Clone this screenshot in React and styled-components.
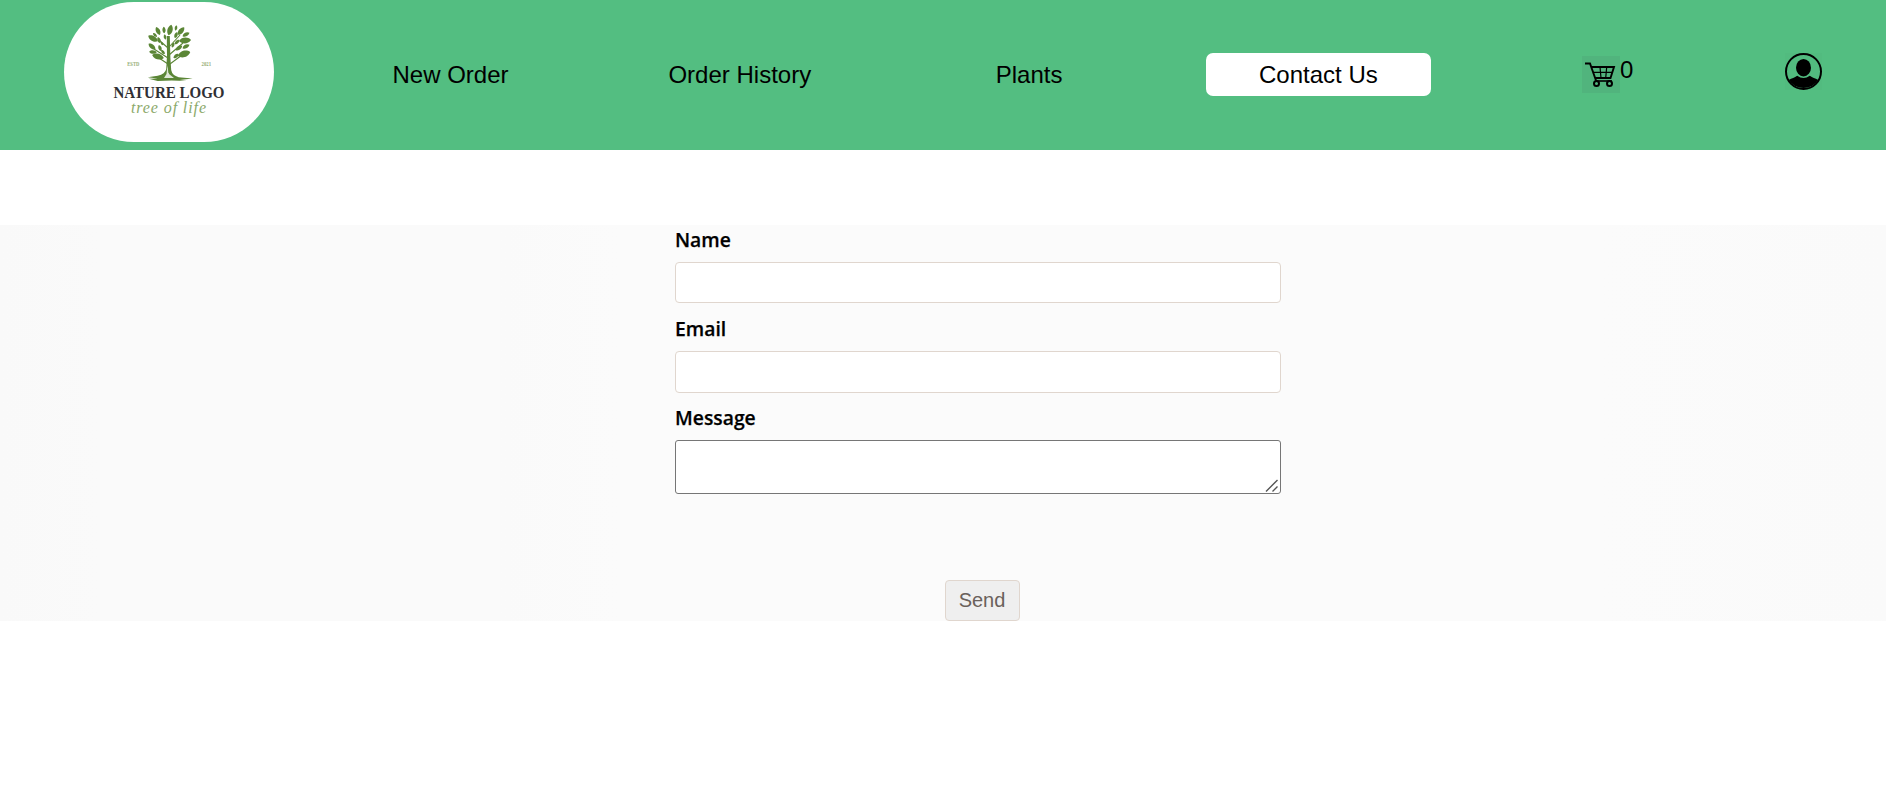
import React from "react";
import styled, { createGlobalStyle } from "styled-components";

const GlobalStyle = createGlobalStyle`
  *, *::before, *::after { box-sizing: border-box; }
  body { margin: 0; background: #fff; font-family: "Liberation Sans", Arial, sans-serif; color: #000; }
`;

const Page = styled.div`
  width: 1886px;
`;

const Header = styled.header`
  display: flex;
  align-items: flex-start;
  gap: 64px;
  height: 150px;
  padding: 2px 64px 0;
  background: #53be81;
`;

const LogoBadge = styled.div`
  width: 210px;
  height: 140px;
  flex: none;
  border-radius: 70px;
  background: #fff;
  overflow: hidden;
  svg { display: block; }
`;

const Nav = styled.nav`
  display: flex;
  flex: 1;
  gap: 64.3px;
  padding-top: 51px;
`;

const NavItem = styled.a`
  flex: 0 0 225px;
  height: 43px;
  line-height: 43px;
  border-radius: 7px;
  text-align: center;
  font-size: 24px;
  background: ${(p) => (p.$active ? "#fff" : "transparent")};
`;

const CartLink = styled.a`
  display: flex;
  flex: 0 0 225px;
  justify-content: center;
  height: 40px;
  font-size: 24px;
  line-height: 33px;
`;

const CartIcon = styled.svg`
  width: 38px;
  height: 37px;
  margin-top: 3px;
  background: #51b47d;
`;

const ProfileIcon = styled.svg`
  width: 37px;
  height: 37px;
  margin-top: 51px;
  flex: none;
  background: #52bb7f;
`;

const ContactSection = styled.main`
  margin-top: 75px;
  height: 396px;
  background: linear-gradient(90deg, #f9f9f9 0, #fafafa 100px, #fafafa 500px, #fbfbfb 620px, #fbfbfb 1600px, #fafafa 1886px);
`;

const Form = styled.form`
  display: flex;
  flex-direction: column;
  width: 606px;
  margin-left: 675px;
`;

const Label = styled.label`
  display: block;
  height: ${(p) => p.$height}px;
  padding-top: ${(p) => p.$offset}px;
  font: 600 20px/28px "Open Sans", "Noto Sans", sans-serif;
  -webkit-text-stroke: 0.25px #000;
  span {
    display: inline-block;
    transform: scaleX(0.965);
    transform-origin: 0 50%;
  }
`;

const Input = styled.input`
  display: block;
  width: 100%;
  height: ${(p) => p.$height}px;
  border: 1px solid #e0d6ce;
  border-radius: 4px;
  background: #fff;
  outline: none;
`;

const MessageBox = styled.textarea`
  display: block;
  width: 100%;
  height: 54px;
  border: 1px solid #767676;
  border-radius: 3px;
  background: #fff;
  resize: none;
  outline: none;
`;

const MessageField = styled.div`
  position: relative;
`;

const Grip = styled.svg`
  position: absolute;
  right: 2px;
  bottom: 1px;
  width: 14px;
  height: 14px;
`;

const SendButton = styled.button`
  align-self: flex-start;
  width: 75px;
  height: 41px;
  margin: 86px 0 0 270px;
  padding: 0 1px 0 0;
  border: 1px solid #e0d6ce;
  border-radius: 4px;
  background: #efefef;
  color: #6a615b;
  font: 20px "Liberation Sans", Arial, sans-serif;
`;

const leaves = [
  [106, 28, 15, 10], [100, 28, -5, 6], [94, 29, -25, 8], [112, 26, 10, 5],
  [117, 29, 40, 9], [91, 33, -45, 5], [122, 32.5, 65, 7], [89, 36.5, -60, 10],
  [95, 38, -20, 6], [101, 35, -10, 5], [112, 33, 20, 6], [121, 38.5, 85, 11],
  [113, 40, 45, 6], [88, 44.5, -50, 8], [96, 46, -20, 6], [109, 43, 20, 5],
  [115, 46, 55, 7], [122, 44.5, 65, 7], [89, 50, -85, 7], [94, 54.5, -75, 11],
  [120, 52, 72, 12], [112, 54, 50, 6], [99, 50, -40, 5], [98, 41.5, -35, 4],
];

function NatureLogo() {
  return (
    <svg width="210" height="140" viewBox="0 0 210 140">
      <g fill="#5b8636">
        {leaves.map(([x, y, angle, size], i) => (
          <path
            key={i}
            transform={`translate(${x} ${y}) rotate(${angle}) scale(${size / 10})`}
            d="M0-5.5C3.5-2.8 3.5 2.8 0 5.5C-3.5 2.8-3.5-2.8 0-5.5Z"
          />
        ))}
        <path d="M102.8 34h3l.6 22 .8 12q1 5.5 7.5 7.2l14 1.3-13 1.4 7 1.1-15-.6-14 .6-9-2.2 9-.4-10-1.2 10-1.4q7.5-1.5 8.5-6.8l.8-13z" />
      </g>
      <path
        d="M104 46 95 38M104 56 90 47M104 62 92 54M105 45 116 33M105 53 119 41M106 62 118 53"
        fill="none" stroke="#5b8636" strokeWidth="1.1"
      />
      <path d="M100 76l2.5-4 1-9 1.5 9 5 4z" fill="#fff" opacity=".8" />
      <path d="M103.5 59l1.5 12" stroke="#5b8636" strokeWidth="1" />
      <g fontFamily="Liberation Serif, serif">
        <text x="63.3" y="63.5" fontSize="5.5" fontWeight="700" textLength="12" lengthAdjust="spacingAndGlyphs" fill="#93ac74">ESTD</text>
        <text x="137.5" y="63.5" fontSize="5.5" fontWeight="700" textLength="9.5" lengthAdjust="spacingAndGlyphs" fill="#93ac74">2021</text>
        <text x="49.5" y="95.8" fontSize="16.5" fontWeight="700" textLength="111" lengthAdjust="spacingAndGlyphs" fill="#303034">NATURE LOGO</text>
        <text x="67" y="110.5" fontSize="16" fontStyle="italic" textLength="75" fill="#8ba96a">tree of life</text>
      </g>
    </svg>
  );
}

export default function App() {
  return (
    <>
      <GlobalStyle />
      <Page>
        <Header>
          <LogoBadge><NatureLogo /></LogoBadge>
          <Nav>
            <NavItem>New Order</NavItem>
            <NavItem>Order History</NavItem>
            <NavItem>Plants</NavItem>
            <NavItem $active>Contact Us</NavItem>
            <CartLink>
              <CartIcon viewBox="0 0 38 37" fill="none" stroke="#000">
                <path d="M3 7.5h5L14 24.5M9 11h23l-3.5 11H13" strokeWidth="1.9" />
                <path d="M11 16.3h19M18 11l1 11M24.7 11l-1 11" strokeWidth="1.2" />
                <path d="M14 25h16" strokeWidth="1.6" />
                <circle cx="14.5" cy="27.5" r="2.5" strokeWidth="2" />
                <circle cx="27.5" cy="27.5" r="2.5" strokeWidth="2" />
              </CartIcon>
              0
            </CartLink>
          </Nav>
          <ProfileIcon viewBox="0 0 37 37">
            <circle cx="18.5" cy="18.5" r="17.5" fill="none" stroke="#000" strokeWidth="2" />
            <ellipse cx="18.5" cy="14.7" rx="7.5" ry="8.7" />
            <path d="M3.7 27C7 24.8 9.5 25 12.2 22.7q6.3 4.6 12.6 0C27.5 25 30 24.8 33.3 27A17.6 17.6 0 0 1 3.7 27Z" />
          </ProfileIcon>
        </Header>
        <ContactSection>
          <Form>
            <Label htmlFor="name" $height={37} $offset={1}><span>Name</span></Label>
            <Input id="name" $height={41} />
            <Label htmlFor="email" $height={48} $offset={12}><span>Email</span></Label>
            <Input id="email" $height={42} />
            <Label htmlFor="message" $height={47} $offset={11}><span>Message</span></Label>
            <MessageField>
              <MessageBox id="message" />
              <Grip viewBox="0 0 14 14" stroke="#555" strokeWidth="1.4">
                <path d="M1 12.5 12.5 1M7.5 12.5l5-5" />
              </Grip>
            </MessageField>
            <SendButton type="button">Send</SendButton>
          </Form>
        </ContactSection>
      </Page>
    </>
  );
}
